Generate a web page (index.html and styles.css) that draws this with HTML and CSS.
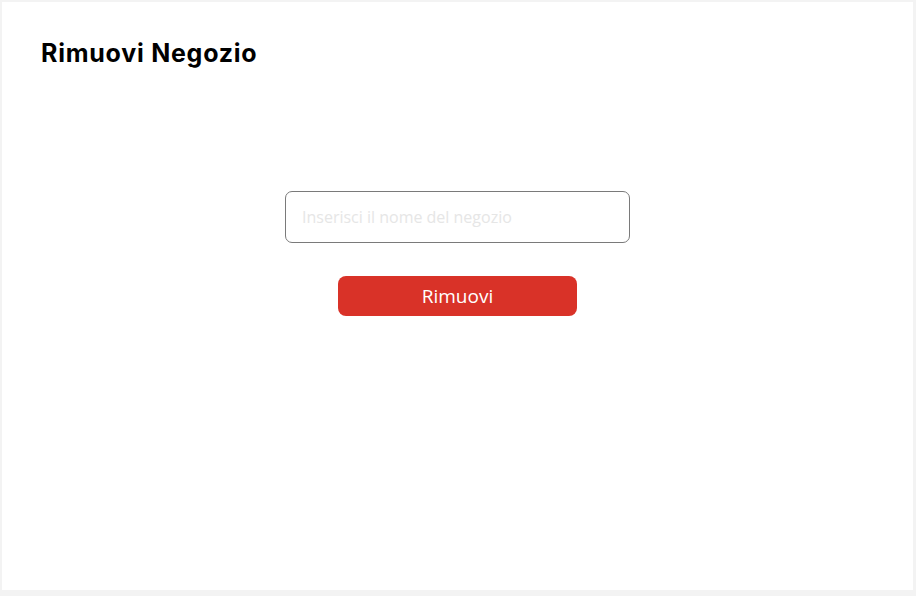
FILE: index.html
```html
<!DOCTYPE html>
<html lang="it">
<head>
<meta charset="utf-8">
<title>Rimuovi Negozio</title>
<link rel="stylesheet" href="styles.css">
</head>
<body>
<main class="panel">
  <h1 class="title">Rimuovi Negozio</h1>
  <form class="form">
    <input class="field" type="text" placeholder="Inserisci il nome del negozio">
    <button class="btn" type="button">Rimuovi</button>
  </form>
</main>
</body>
</html>
```

FILE: styles.css
```css
html, body {
  margin: 0;
  padding: 0;
}
body {
  background: #f3f3f3;
  width: 916px;
  height: 596px;
  overflow: hidden;
}
.panel {
  box-sizing: border-box;
  margin: 2px 3px 0 2px;
  width: 911px;
  height: 588px;
  background: #ffffff;
  padding: 36px 39px 0;
}
.title {
  margin: 0;
  font-family: Inter, "Liberation Sans", sans-serif;
  font-optical-sizing: none;
  font-weight: 700;
  font-size: 25px;
  line-height: 30px;
  color: #000;
  letter-spacing: 0.75px;
}
.form {
  display: flex;
  flex-direction: column;
  align-items: center;
  margin-top: 123px;
}
.field {
  box-sizing: border-box;
  width: 345px;
  height: 52px;
  border: 1px solid #7a7a7a;
  border-radius: 7px;
  padding: 0 16px;
  font-family: "Open Sans", sans-serif;
  font-size: 16px;
  color: #333;
  outline: none;
}
.field::placeholder {
  color: #e6e6e6;
}
.btn {
  margin-top: 33px;
  width: 239px;
  height: 40px;
  border: none;
  border-radius: 8px;
  background: #d93228;
  color: #fff;
  font-family: "Open Sans", sans-serif;
  font-size: 19px;
  padding: 0;
  cursor: pointer;
}
```
